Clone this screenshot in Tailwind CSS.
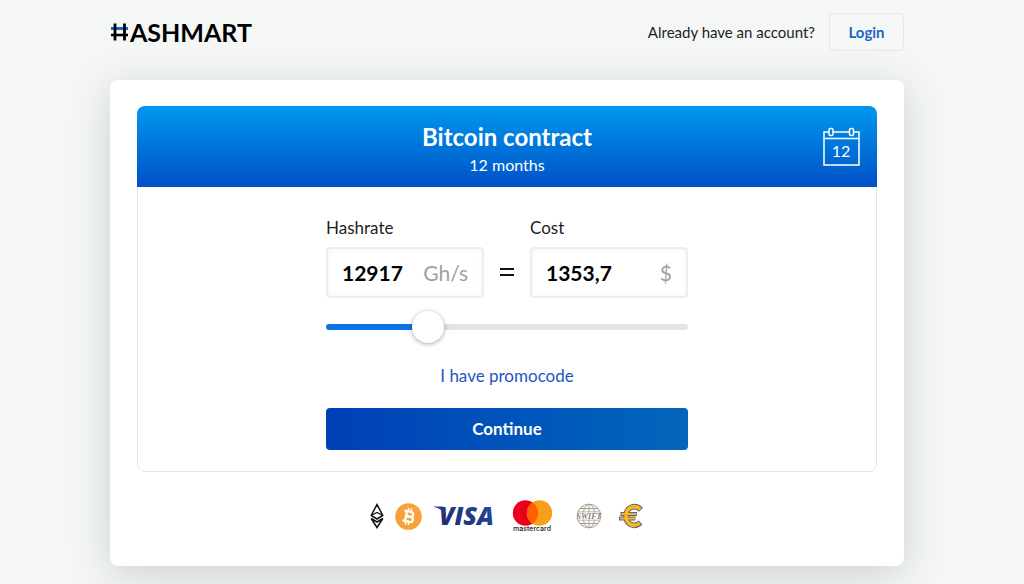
<!DOCTYPE html>
<html lang="en">
  <head>
    <meta charset="UTF-8" />
    <meta name="viewport" content="width=device-width, initial-scale=1.0" />
    <title>Hashmart</title>
    <script src="https://cdn.jsdelivr.net/npm/@tailwindcss/browser@4"></script>
  </head>
  <body class="min-h-screen bg-[#f5f7f6] pr-[10px] font-['Lato',sans-serif] text-[#1c1f22]">
    <div class="mx-auto w-full max-w-[794px]">
      <header class="flex h-20 items-center justify-between pb-4">
        <a href="#" class="flex items-center text-black" aria-label="Hashmart">
          <svg class="h-5 w-5" viewBox="0 0 20 20" fill="none">
            <path d="M1 6.500h17" stroke="#1268c4" stroke-width="3" />
            <path d="M5 1.500v17M14.500 1.500v17" stroke="#000" stroke-width="2.800" />
            <path d="M1 13h17" stroke="#000" stroke-width="2.600" />
          </svg>
          <span class="text-[25px] leading-5 font-bold">ASHMART</span>
        </a>
        <div class="flex items-center gap-[14px]">
          <span class="text-[15px]">Already have an account?</span>
          <a
            href="#"
            class="flex h-[38px] w-[75px] items-center justify-center rounded border border-[#e6e9ea] text-[15px] font-bold text-[#1b66c3]"
            >Login</a
          >
        </div>
      </header>

      <main
        class="rounded-lg bg-white px-[27px] pt-[26px] pb-[34px] shadow-[0_8px_40px_rgba(40,50,80,0.2)]"
      >
        <section class="rounded-lg border border-[#e4e6e8]">
          <div
            class="relative -mx-px -mt-px flex h-[81px] flex-col items-center justify-center rounded-t-lg bg-linear-to-b from-[#0098ee] to-[#0450c6] pt-1 text-white"
          >
            <h1 class="text-2xl leading-8 font-bold">Bitcoin contract</h1>
            <p class="text-base leading-6">12 months</p>
            <svg
              class="absolute top-5 right-4 h-10 w-10"
              viewBox="0 0 40 40"
              fill="none"
              stroke="#fff"
              stroke-width="1.500"
            >
              <path d="M8 6H3v33h35V6h-5M12 6h16.500M3 12.500h35" />
              <rect x="8" y="2.500" width="4" height="7" rx="1.500" />
              <rect x="28.500" y="2.500" width="4" height="7" rx="1.500" />
              <text
                x="20"
                y="31"
                text-anchor="middle"
                font-size="16"
                fill="#fff"
                stroke="none"
              >
                12
              </text>
            </svg>
          </div>

          <form class="mx-auto w-full max-w-[362px] pt-[29px] pb-[21px]">
            <div class="flex items-end justify-between">
              <div class="w-[158px]">
                <label for="hashrate" class="mb-[7px] block text-[17px] leading-6">Hashrate</label>
                <div
                  class="flex h-[51px] items-center rounded border-2 border-[#eceded] px-[14px] text-[21px] shadow-[inset_0_0_5px_rgba(0,0,0,0.05)]"
                >
                  <input
                    id="hashrate"
                    type="text"
                    value="12917"
                    class="w-0 min-w-0 flex-1 font-bold text-black outline-none"
                  />
                  <span class="text-[#a0a0a0]">Gh/s</span>
                </div>
              </div>
              <svg class="mb-[18px] h-4 w-4" viewBox="0 0 16 16" stroke="#111" stroke-width="2">
                <path d="M1 5h14M1 11h14" />
              </svg>
              <div class="w-[158px]">
                <label for="cost" class="mb-[7px] block text-[17px] leading-6">Cost</label>
                <div
                  class="flex h-[51px] items-center rounded border-2 border-[#eceded] px-[14px] text-[21px] shadow-[inset_0_0_5px_rgba(0,0,0,0.05)]"
                >
                  <input
                    id="cost"
                    type="text"
                    value="1353,7"
                    class="w-0 min-w-0 flex-1 font-bold text-black outline-none"
                  />
                  <span class="text-[#a0a0a0]">$</span>
                </div>
              </div>
            </div>

            <input
              type="range"
              min="0"
              max="100"
              value="26"
              aria-label="Hashrate amount"
              class="mt-[26px] block h-[6px] w-full appearance-none rounded-full bg-linear-to-r from-[#0a74e6] from-28% to-[#e0e5ea] to-28% outline-none [&::-webkit-slider-thumb]:h-8 [&::-webkit-slider-thumb]:w-8 [&::-webkit-slider-thumb]:appearance-none [&::-webkit-slider-thumb]:rounded-full [&::-webkit-slider-thumb]:bg-white [&::-webkit-slider-thumb]:shadow-[0_1px_5px_rgba(0,0,0,0.35)]"
            />

            <a href="#" class="mt-[34px] block text-center text-[17px] leading-6 text-[#1b56c4]"
              >I have promocode</a
            >
            <button
              type="button"
              class="mt-5 h-[42px] w-full rounded bg-linear-to-r from-[#003fb6] to-[#0566bc] text-[17px] font-bold text-white"
            >
              Continue
            </button>
          </form>
        </section>

        <div class="mt-7 flex h-8 items-center justify-center">
          <!-- ethereum -->
          <svg class="h-[26px] w-[14px]" viewBox="0 0 14 26" fill="none" stroke="#111" stroke-width="1.500">
            <path d="M7 1.500 1.200 12.500 7 16l5.800-3.500z" />
            <path d="M1.200 12.500 7 9.500l5.800 3" stroke-width="1.300" />
            <path d="m1.200 15.500 5.800 9 5.800-9L7 19z" />
          </svg>
          <!-- bitcoin -->
          <svg class="ml-[11px] h-[27px] w-[27px]" viewBox="0 0 27 27" fill="none">
            <circle cx="13.500" cy="13.500" r="13.300" fill="#f7a13a" />
            <g transform="rotate(12 13.500 13.500)" stroke="#fff" stroke-width="2.300">
              <path d="M8.500 8.500h6.700a2.400 2.400 0 0 1 0 4.900H11h4.800a2.600 2.600 0 0 1 0 5.200H8.500M11 8.500v10" />
              <path d="M12 5v3M15 5v3M12 19v3M15 19v3" stroke-width="1.500" />
            </g>
          </svg>
          <!-- visa -->
          <svg class="ml-3 h-6 w-[62px]" viewBox="0 0 62 24">
            <defs>
              <linearGradient id="visa" x1="0" y1="1" x2="1" y2="0">
                <stop offset="0" stop-color="#20266b" />
                <stop offset="1" stop-color="#244f9f" />
              </linearGradient>
            </defs>
            <path d="M0 2.500h8c1.600 0 2.300.8 2.600 2L12 12C10 7.500 6 4.200 0 3z" fill="url(#visa)" />
            <text
              x="5"
              y="21"
              class="font-['Open_Sans',sans-serif] text-[25px] font-extrabold italic"
              fill="url(#visa)"
            >
              VISA
            </text>
          </svg>
          <!-- mastercard -->
          <svg class="ml-[14px] h-[34px] w-[44px]" viewBox="0 0 44 34">
            <circle cx="15.500" cy="14" r="12.700" fill="#eb001b" />
            <circle cx="29.500" cy="14" r="12.700" fill="#f79e1b" />
            <path d="M22.500 3.400a12.700 12.700 0 0 1 0 21.200 12.700 12.700 0 0 1 0-21.200z" fill="#ff5f00" />
            <text
              x="22"
              y="32"
              text-anchor="middle"
              class="font-['Inter',sans-serif] text-[7px] font-medium"
              fill="#222"
            >
              mastercard
            </text>
          </svg>
          <!-- swift -->
          <svg class="ml-[22px] h-[26px] w-[26px]" viewBox="0 0 26 26" fill="none" stroke="#a79c91">
            <circle cx="13" cy="13" r="11.800" />
            <ellipse cx="13" cy="13" rx="6" ry="11.800" />
            <path d="M13 1v24M4 5.500h18M2 9h22M2 17h22M4 20.500h18" />
            <path d="M2 9.500h22v7H2z" fill="#fff" stroke="none" />
            <text
              x="13"
              y="16"
              text-anchor="middle"
              class="font-['Liberation_Serif',serif] text-[8px] font-bold italic"
              fill="#8b7f75"
              stroke="none"
            >
              SWIFT
            </text>
          </svg>
          <!-- euro -->
          <svg class="ml-4 h-[26px] w-[26px]" viewBox="0 0 26 26" fill="none">
            <g stroke="#5663a0" stroke-width="5.600">
              <path d="M23 6.800C20 3.500 16 3 12.800 4.500 6.500 7.500 6.500 18.500 12.800 21.500c3.200 1.500 6.800.8 9.800-2" />
              <path d="M2.500 11H19M1 15.500h16.500" stroke-width="4" />
            </g>
            <g stroke="#fbb90f" stroke-width="3.600">
              <path d="M22.500 6.200C20 3.800 16 3 12.800 4.500 6.500 7.500 6.500 18.500 12.800 21.500c3.200 1.500 6.400.8 9-1.500" />
              <path d="M3.500 11h15M2 15.500h15" stroke-width="2.200" />
            </g>
          </svg>
        </div>
      </main>
    </div>
  </body>
</html>
